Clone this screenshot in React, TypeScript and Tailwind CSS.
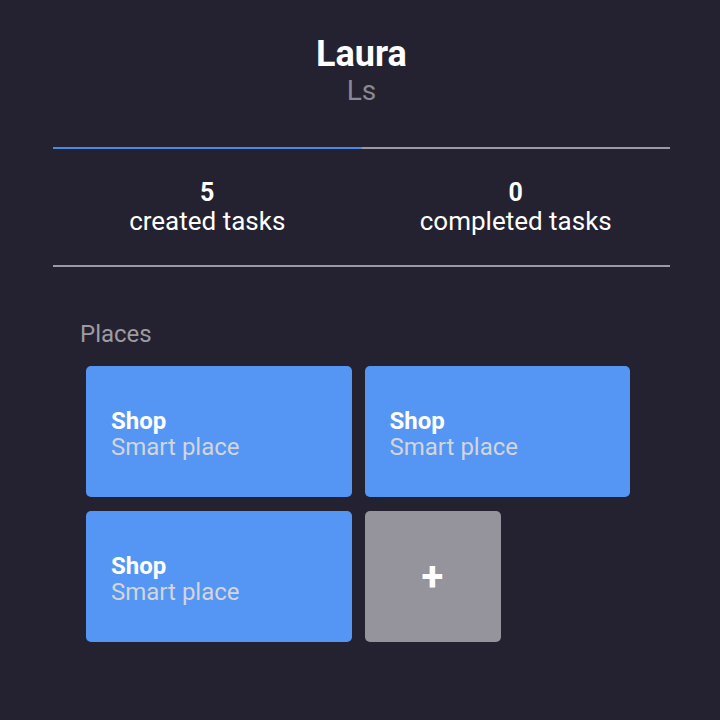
const places = [
  { id: 1, name: 'Shop', kind: 'Smart place' },
  { id: 2, name: 'Shop', kind: 'Smart place' },
  { id: 3, name: 'Shop', kind: 'Smart place' },
];

function Stat({ value, label }: { value: number; label: string }) {
  return (
    <div className="flex flex-col items-center text-white">
      <span className="text-[25px] font-bold leading-[26px]">{value}</span>
      <span className="text-[26px] leading-[30px]">{label}</span>
    </div>
  );
}

export default function App() {
  return (
    <div
      className="min-h-[720px] w-[720px] bg-[#242130] pt-[33px]"
      style={{ fontFamily: 'Roboto, "Noto Sans", sans-serif' }}
    >
      <div className="ml-[53px] w-[617px]">
        <div className="flex flex-col items-center">
          <h1 className="text-[36px] font-bold leading-[42px] text-white">Laura</h1>
          <p className="text-[28px] leading-[32px] text-[#8a8892]">Ls</p>
        </div>

        <div className="mt-[40px] flex h-[2px]">
          <div className="w-1/2 bg-[#4a8ae6]"></div>
          <div className="w-1/2 bg-[#9b9aa2]"></div>
        </div>

        <div className="grid grid-cols-2 pt-[31px] pb-[29px]">
          <Stat value={5} label="created tasks" />
          <Stat value={0} label="completed tasks" />
        </div>

        <div className="h-[2px] bg-[#9b9aa2]"></div>

        <div className="pl-[27px] pt-[53px]">
          <h2 className="text-[24px] leading-[28px] text-[#9d9ba4]">Places</h2>

          <div className="mt-[18px] ml-[6px] grid w-[544px] grid-cols-2 auto-rows-[131px] gap-x-[13px] gap-y-[14px]">
            {places.map((p) => (
              <div
                key={p.id}
                className="flex flex-col justify-center rounded-[5px] bg-[#5596f4] pl-[25px] pt-[4px]"
              >
                <span className="text-[24px] font-bold leading-[26px] text-white">{p.name}</span>
                <span className="text-[24px] leading-[26px] text-[#d2d5da]">{p.kind}</span>
              </div>
            ))}
            <button className="flex w-[136px] items-center justify-center rounded-[5px] bg-[#95939c] text-[40px] font-bold leading-none text-white">
              +
            </button>
          </div>
        </div>
      </div>
    </div>
  );
}
